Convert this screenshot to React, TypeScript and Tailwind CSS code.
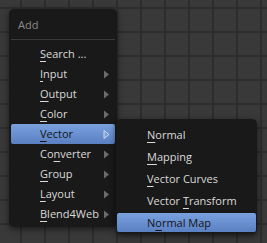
import React from "react";

type Item = { pre: string; key: string; post: string; sub?: boolean; active?: boolean };

const mainItems: Item[] = [
  { pre: "", key: "S", post: "earch ..." },
  { pre: "", key: "I", post: "nput", sub: true },
  { pre: "", key: "O", post: "utput", sub: true },
  { pre: "", key: "C", post: "olor", sub: true },
  { pre: "", key: "V", post: "ector", sub: true, active: true },
  { pre: "Co", key: "n", post: "verter", sub: true },
  { pre: "", key: "G", post: "roup", sub: true },
  { pre: "", key: "L", post: "ayout", sub: true },
  { pre: "", key: "B", post: "lend4Web", sub: true },
];

const vectorItems: Item[] = [
  { pre: "", key: "N", post: "ormal" },
  { pre: "", key: "M", post: "apping" },
  { pre: "", key: "V", post: "ector Curves" },
  { pre: "Vector ", key: "T", post: "ransform" },
  { pre: "N", key: "o", post: "rmal Map", active: true },
];

function Arrow({ active }: { active?: boolean }) {
  return (
    <svg width="7" height="9" viewBox="0 0 7 9" className="shrink-0">
      {active ? (
        <polygon points="1,0.5 6,4.5 1,8.5" fill="#7a9fdc" stroke="#d0d8e8" strokeWidth="1" />
      ) : (
        <polygon points="1,0.5 6,4.5 1,8.5" fill="#6b6b6b" />
      )}
    </svg>
  );
}

function Label({ item }: { item: Item }) {
  return (
    <span className="whitespace-pre">
      {item.pre}
      <span className="underline decoration-1 underline-offset-[3px]">{item.key}</span>
      {item.post}
    </span>
  );
}

export default function App() {
  return (
    <div
      className="relative w-[267px] h-[243px] overflow-hidden bg-[#393939] [background-image:linear-gradient(#2d2d2d_2px,transparent_2px),linear-gradient(90deg,#2d2d2d_2px,transparent_2px)] [background-size:24px_24px] [background-position:20px_7px] text-[11px]"
      style={{ fontFamily: '"Open Sans", "DejaVu Sans", sans-serif' }}
    >
      {/* Add menu */}
      <div className="absolute left-[9px] top-[9px] w-[108px] h-[218px] rounded-[5px] bg-[#191919] shadow-[0_2px_6px_rgba(0,0,0,0.55)] flex flex-col">
        <div className="h-[30px] pl-[9px] pt-[9px] leading-[14px] text-[#8a8a8a]">Add</div>
        <div className="mx-[2px] h-px bg-[#3a3a3a]" />
        <div className="mt-[4px] flex flex-col">
          {mainItems.map((it, i) => (
            <div
              key={i}
              className={
                "mx-[2px] h-[20px] flex items-center justify-between pl-[29px] pr-[5px] leading-[20px] " +
                (it.active
                  ? "bg-gradient-to-b from-[#7aa1de] to-[#5a80c2] text-[#141414] rounded-[2px]"
                  : "text-[#dadada]")
              }
            >
              <Label item={it} />
              {it.sub && <Arrow active={it.active} />}
            </div>
          ))}
        </div>
      </div>

      {/* Vector submenu */}
      <div className="absolute left-[116px] top-[119px] w-[141px] h-[115px] rounded-[5px] bg-[#191919] shadow-[0_2px_6px_rgba(0,0,0,0.6)] pt-[4px] flex flex-col">
        {vectorItems.map((it, i) => (
          <div key={i} className="h-[22px] flex items-center px-[1px]">
            <div
              className={
                "w-full h-[19px] flex items-center pl-[30px] leading-[19px] " +
                (it.active
                  ? "bg-gradient-to-b from-[#7aa1de] to-[#5a80c2] text-[#141414] rounded-[2px]"
                  : "text-[#dadada]")
              }
            >
              <Label item={it} />
            </div>
          </div>
        ))}
      </div>
    </div>
  );
}
